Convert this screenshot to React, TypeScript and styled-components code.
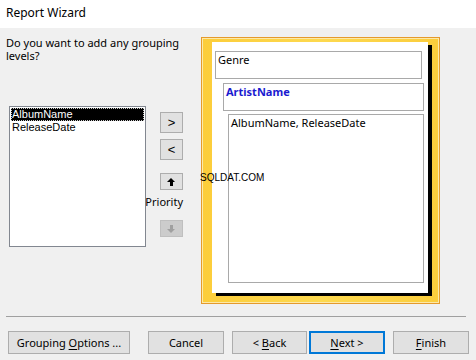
import React from 'react';
import styled, { createGlobalStyle } from 'styled-components';

const GlobalStyle = createGlobalStyle`
  html, body {
    margin: 0;
    padding: 0;
    background: #f0f0f0;
  }
  * {
    box-sizing: border-box;
  }
`;

const fields = ['AlbumName', 'ReleaseDate'];

function App() {
  return (
    <Window>
      <GlobalStyle />
      <TitleBar>Report Wizard</TitleBar>
      <Main>
        <LeftPane>
          <Question>Do you want to add any grouping levels?</Question>
          <PickerRow>
            <FieldList>
              {fields.map((name, i) => (
                <FieldItem key={name} selected={i === 0}>
                  {name}
                </FieldItem>
              ))}
            </FieldList>
            <ButtonColumn>
              <ArrowButton>&gt;</ArrowButton>
              <ArrowButton style={{ marginTop: 6 }}>&lt;</ArrowButton>
              <PriorityButton style={{ marginTop: 13 }}>
                <Triangle dir="up" />
              </PriorityButton>
              <PriorityLabel>Priority</PriorityLabel>
              <PriorityButton disabled>
                <Triangle dir="down" disabled />
              </PriorityButton>
            </ButtonColumn>
          </PickerRow>
        </LeftPane>
        <Preview>
          <Page>
            <GroupBox indent={3} height={28}>
              <GroupText>Genre</GroupText>
            </GroupBox>
            <GroupBox indent={11} height={28} gap={4}>
              <GroupText bold>ArtistName</GroupText>
            </GroupBox>
            <GroupBox indent={16} gap={3} grow>
              <GroupText>AlbumName, ReleaseDate</GroupText>
            </GroupBox>
          </Page>
        </Preview>
      </Main>
      <Separator />
      <Footer>
        <DialogButton width={122}>
          <span>
            Grouping <u>O</u>ptions ...
          </span>
        </DialogButton>
        <DialogButton width={76} style={{ marginLeft: 18 }}>
          <span>Cancel</span>
        </DialogButton>
        <DialogButton width={75} style={{ marginLeft: 8 }}>
          <span>
            &lt; <u>B</u>ack
          </span>
        </DialogButton>
        <DialogButton width={76} primary style={{ marginLeft: 2 }}>
          <span>
            <u>N</u>ext &gt;
          </span>
        </DialogButton>
        <DialogButton width={76} style={{ marginLeft: 8 }}>
          <span>
            <u>F</u>inish
          </span>
        </DialogButton>
      </Footer>
      <Watermark>SQLDAT.COM</Watermark>
    </Window>
  );
}

export default App;

const Window = styled.div`
  position: relative;
  width: 476px;
  height: 360px;
  background: #f0f0f0;
  font-family: 'Noto Sans', 'Open Sans', sans-serif;
  font-size: 11px;
  color: #000;
  overflow: hidden;
`;
const TitleBar = styled.div`
  height: 28px;
  padding: 5px 0 0 6px;
  background: #fff;
  font-size: 12px;
  line-height: 16px;
`;
const Main = styled.div`
  display: flex;
  height: 288px;
`;
const LeftPane = styled.div`
  width: 201px;
  padding: 8px 0 0 6px;
  display: flex;
  flex-direction: column;
`;
const Question = styled.p`
  margin: 0;
  width: 190px;
  line-height: 13px;
`;
const PickerRow = styled.div`
  display: flex;
  margin-top: 44px;
  margin-left: 3px;
`;
const FieldList = styled.ul`
  width: 137px;
  height: 141px;
  margin: 0;
  padding: 1px;
  list-style: none;
  background: #fff;
  border: 1px solid #828790;
  font-family: 'Liberation Sans', Arial, sans-serif;
  font-size: 11px;
`;
const FieldItem = styled.li<{ selected?: boolean }>`
  height: 13px;
  line-height: 13px;
  padding-left: 1px;
  background: ${(p) => (p.selected ? '#000' : 'transparent')};
  color: ${(p) => (p.selected ? '#fff' : '#000')};
  outline: ${(p) => (p.selected ? '1px dotted #ccc' : 'none')};
  outline-offset: -1px;
`;
const ButtonColumn = styled.div`
  width: 37px;
  padding-top: 6px;
  display: flex;
  flex-direction: column;
  align-items: flex-end;
`;
const ArrowButton = styled.div`
  width: 23px;
  height: 21px;
  display: flex;
  align-items: center;
  justify-content: center;
  background: #e1e1e1;
  border: 1px solid #adadad;
  font-family: 'Liberation Sans', Arial, sans-serif;
  font-size: 13px;
`;
const PriorityButton = styled.div<{ disabled?: boolean }>`
  width: 23px;
  height: 17px;
  display: flex;
  align-items: center;
  justify-content: center;
  background: ${(p) => (p.disabled ? '#cccccc' : '#e1e1e1')};
  border: 1px solid ${(p) => (p.disabled ? '#bfbfbf' : '#adadad')};
`;
const Triangle = styled.span<{ dir: 'up' | 'down'; disabled?: boolean }>`
  position: relative;
  width: 9px;
  height: 8px;
  &::before {
    content: '';
    position: absolute;
    left: 0;
    ${(p) => (p.dir === 'up' ? 'top: 0;' : 'bottom: 0;')}
    border-left: 4.5px solid transparent;
    border-right: 4.5px solid transparent;
    ${(p) =>
      p.dir === 'up'
        ? `border-bottom: 4px solid ${p.disabled ? '#a0a0a0' : '#000'};`
        : `border-top: 4px solid ${p.disabled ? '#a0a0a0' : '#000'};`}
  }
  &::after {
    content: '';
    position: absolute;
    left: 3px;
    width: 3px;
    height: 4px;
    ${(p) => (p.dir === 'up' ? 'bottom: 0;' : 'top: 0;')}
    background: ${(p) => (p.disabled ? '#a0a0a0' : '#000')};
  }
`;
const PriorityLabel = styled.div`
  margin: 5px 0 11px;
  line-height: 14px;
  white-space: nowrap;
`;
const Preview = styled.div`
  width: 239px;
  height: 267px;
  margin-top: 9px;
  padding: 4px 6px 0 10px;
  background: linear-gradient(90deg, #fccd3a 0%, #fdd94f 50%, #fbcd3c 100%);
  border: 1px solid #e59a2c;
  box-shadow: inset 0 0 0 1px #fde9a8;
`;
const Page = styled.div`
  width: 216px;
  height: 251px;
  display: flex;
  flex-direction: column;
  padding: 9px 4px 10px 0;
  background: #fff;
  box-shadow: 4px 3px 0 0 #000;
`;
const GroupBox = styled.div<{ indent: number; height?: number; gap?: number; grow?: boolean }>`
  margin-left: ${(p) => p.indent}px;
  margin-right: ${(p) => (p.indent === 3 ? 2 : 0)}px;
  margin-top: ${(p) => p.gap || 0}px;
  height: ${(p) => (p.height ? `${p.height}px` : 'auto')};
  flex: ${(p) => (p.grow ? 1 : 'none')};
  border: 1px solid #a9a9a9;
  padding: 1px 2px;
`;
const GroupText = styled.div<{ bold?: boolean }>`
  line-height: 14px;
  font-weight: ${(p) => (p.bold ? 700 : 400)};
  color: ${(p) => (p.bold ? '#1a1ad0' : '#000')};
`;
const Separator = styled.hr`
  margin: 0 10px 0 6px;
  border: none;
  border-top: 1px solid #a0a0a0;
`;
const Footer = styled.div`
  display: flex;
  padding: 14px 0 0 8px;
`;
const DialogButton = styled.div<{ width: number; primary?: boolean }>`
  width: ${(p) => p.width}px;
  height: 23px;
  display: flex;
  align-items: center;
  justify-content: center;
  background: #e1e1e1;
  border: ${(p) => (p.primary ? '2px solid #0078d7' : '1px solid #adadad')};
  white-space: nowrap;
  u {
    text-underline-offset: 2px;
  }
`;
const Watermark = styled.div`
  position: absolute;
  left: 200px;
  top: 172px;
  font-family: 'Liberation Sans', Arial, sans-serif;
  font-size: 10px;
  line-height: 12px;
  color: #000;
`;
